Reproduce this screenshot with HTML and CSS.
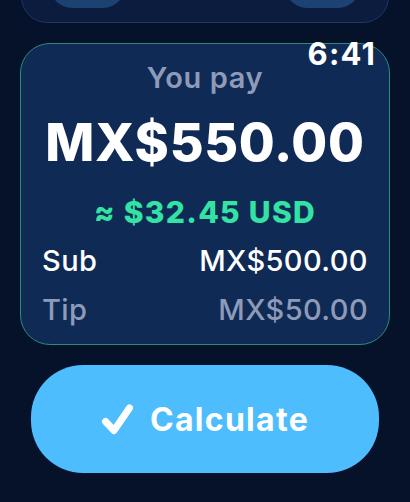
FILE: index.html
```html
<!DOCTYPE html>
<html>
<head>
<meta charset="utf-8">
<link rel="stylesheet" href="styles.css">
</head>
<body>
<div class="screen">
  <div class="top-card">
    <div class="pill"></div>
    <div class="pill"></div>
  </div>
  <div class="pay-card">
    <div class="label">You pay</div>
    <div class="total">MX$550.00</div>
    <div class="usd">≈ $32.45 USD</div>
    <div class="row"><span>Sub</span><span>MX$500.00</span></div>
    <div class="row muted"><span>Tip</span><span>MX$50.00</span></div>
  </div>
  <button class="calc">
    <svg class="check" width="33" height="32" viewBox="0 0 33 32"><path d="M4.5 18.5 L13 27.5 L28.5 5" fill="none" stroke="#fff" stroke-width="7" stroke-linecap="round" stroke-linejoin="round"/></svg>
    <span>Calculate</span>
  </button>
  <div class="clock">6:41</div>
</div>
</body>
</html>
```

FILE: styles.css
```css
html, body {
  margin: 0;
  padding: 0;
  background: #06112a;
}
.screen {
  position: relative;
  width: 410px;
  height: 502px;
  overflow: hidden;
  padding: 0 20px;
  box-sizing: border-box;
  font-family: Inter, "Noto Sans", sans-serif;
  display: flex;
  flex-direction: column;
}
.top-card {
  margin: -42px 1px 0;
  height: 65px;
  box-sizing: border-box;
  padding: 0 28px 14px;
  border: 1.5px solid #1a3866;
  border-radius: 26px;
  background: #0b1c3f;
  display: flex;
  justify-content: space-between;
  align-items: flex-end;
}
.pill {
  width: 75px;
  height: 48px;
  border-radius: 22px;
  background: #1c4273;
}
.pay-card {
  margin-top: 20px;
  border: 1.5px solid #2a8c7b;
  border-radius: 30px;
  background: #102a56;
  padding: 16px 21px 16px;
  display: flex;
  flex-direction: column;
  align-items: stretch;
}
.label {
  text-align: center;
  font-size: 29px;
  line-height: 36px;
  font-weight: 600;
  letter-spacing: 0.6px;
  color: #8e9bb8;
}
.total {
  margin-top: 17px;
  text-align: center;
  font-size: 52px;
  line-height: 60px;
  font-weight: 800;
  letter-spacing: 0.7px;
  color: #ffffff;
}
.usd {
  margin-top: 21px;
  text-align: center;
  font-size: 30px;
  line-height: 36px;
  font-weight: 800;
  letter-spacing: 1.3px;
  color: #34e3a4;
}
.row {
  margin-top: 13px;
  display: flex;
  justify-content: space-between;
  font-size: 29px;
  line-height: 36px;
  font-weight: 500;
  letter-spacing: 0.4px;
  color: #ffffff;
}
.row.muted {
  color: #8e9bb8;
}
.calc {
  margin: 20px 11px 0;
  height: 108px;
  border: none;
  border-radius: 52px;
  background: #4dbdfe;
  display: flex;
  align-items: center;
  justify-content: center;
  gap: 16px;
  font-family: Inter, "Noto Sans", sans-serif;
  font-size: 32px;
  font-weight: 700;
  letter-spacing: 1.3px;
  color: #ffffff;
  padding: 0;
}
.check {
  display: block;
}
.clock {
  position: absolute;
  top: 39px;
  right: 34px;
  font-size: 31px;
  line-height: 30px;
  font-weight: 700;
  letter-spacing: 1.2px;
  color: #ffffff;
}
```
